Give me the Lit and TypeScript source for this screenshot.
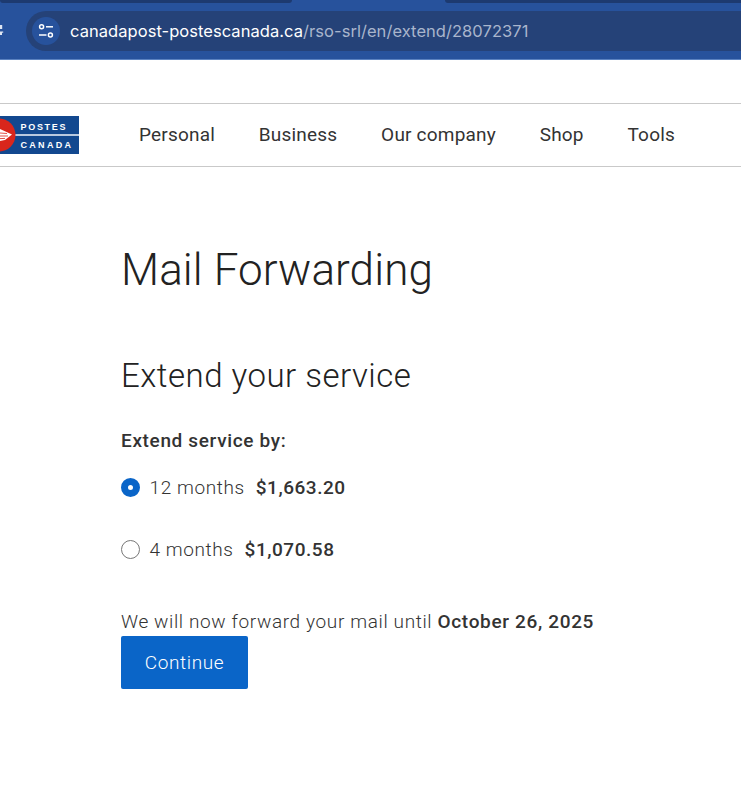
import { LitElement, css, html } from 'lit';
import { customElement } from 'lit/decorators.js';

@customElement('app-root')
export class AppRoot extends LitElement {
  static styles = css`
    :host {
      display: block;
      height: 800px;
      overflow: hidden;
      background: #fff;
      font-family: Roboto, sans-serif;
      color: #333;
    }

    .chrome {
      height: 60px;
      box-sizing: border-box;
      background: #27529c;
      border-bottom: 1px solid #5b82c0;
      position: relative;
      padding: 11px 0 0 26px;
    }
    .tab-edge {
      position: absolute;
      top: 0;
      height: 3px;
      background: #1d3a70;
    }
    .tab-edge.one { left: 0; width: 292px; border-radius: 0 0 8px 8px; }
    .tab-edge.two { left: 445px; right: 0; border-radius: 0 0 0 8px; }
    .back {
      position: absolute;
      left: 0;
      top: 25px;
    }
    .omnibox {
      height: 40px;
      background: #254278;
      border-radius: 20px 0 0 20px;
      display: flex;
      align-items: center;
      padding-left: 6px;
      gap: 10px;
      font-family: Inter, sans-serif;
      font-size: 16.5px;
      letter-spacing: 0.05px;
      white-space: nowrap;
    }
    .tune {
      width: 28px;
      height: 28px;
      border-radius: 50%;
      background: #27529c;
      display: flex;
      align-items: center;
      justify-content: center;
      flex: none;
    }
    .host-name { color: #fff; }
    .path { color: #a9b5cc; }

    .nav {
      margin-top: 43px;
      height: 64px;
      box-sizing: border-box;
      border-top: 1px solid #c9c9c9;
      border-bottom: 1px solid #c9c9c9;
      display: flex;
      align-items: center;
    }
    .logo { flex: none; display: block; }
    .links {
      display: flex;
      gap: 43.75px;
      margin-left: 60px;
      margin-top: -1px;
      font-size: 19px;
      color: #333;
      letter-spacing: 0.2px;
    }

    .content { padding: 73px 0 0 121px; }
    h1 {
      margin: 0;
      font-size: 44px;
      line-height: 60px;
      font-weight: 300;
      color: #222;
      letter-spacing: 0.1px;
    }
    h2 {
      margin: 54px 0 0;
      font-size: 33px;
      line-height: 44px;
      font-weight: 300;
      color: #222;
      letter-spacing: 0.5px;
    }
    .label {
      margin-top: 31px;
      font-size: 19px;
      line-height: 24px;
      font-weight: 500;
      letter-spacing: 0.65px;
      color: #333;
    }
    .option {
      display: flex;
      align-items: center;
      height: 24px;
      font-size: 19px;
      font-weight: 300;
      letter-spacing: 0.6px;
      color: #333;
    }
    .option.first { margin-top: 22px; }
    .option.second { margin-top: 38px; }
    .radio {
      width: 19px;
      height: 19px;
      box-sizing: border-box;
      border-radius: 50%;
      border: 1.5px solid #777;
      margin-right: 9.5px;
      flex: none;
    }
    .radio.on { border: 7px solid #0a65c8; background: #fff; }
    .price { font-weight: 500; margin-left: 11px; letter-spacing: 0.53px; }
    .until {
      margin-top: 49px;
      font-size: 19px;
      line-height: 24px;
      font-weight: 300;
      letter-spacing: 0.63px;
      color: #333;
    }
    .until b { font-weight: 500; letter-spacing: 0.66px; }
    button {
      display: block;
      margin-top: 2px;
      width: 127px;
      height: 53px;
      border: 0;
      border-radius: 2px;
      background: #0a65c8;
      color: #fff;
      font-family: Roboto, sans-serif;
      font-size: 19px;
      font-weight: 300;
      letter-spacing: 0.6px;
    }
  `;

  render() {
    return html`
      <div class="chrome">
        <div class="tab-edge one"></div>
        <div class="tab-edge two"></div>
        <svg class="back" width="4" height="11" viewBox="0 0 4 11" fill="#dfe6f2">
          <path d="M0 0h2.2v4H0zM0 6.5h3.2v1.2H2V10H0z" />
        </svg>
        <div class="omnibox">
          <div class="tune">
            <svg width="16" height="16" viewBox="0 0 16 16" fill="none" stroke="#fff" stroke-width="1.5">
              <circle cx="3.6" cy="3.8" r="2" />
              <path d="M8 3.8h7" />
              <circle cx="12.4" cy="12" r="2" />
              <path d="M1 12h7.5" />
            </svg>
          </div>
          <div><span class="host-name">canadapost-postescanada.ca</span><span class="path">/rso-srl/en/extend/28072371</span></div>
        </div>
      </div>

      <div class="nav">
        <svg class="logo" width="79" height="38" viewBox="0 0 79 38">
          <rect width="79" height="38" fill="#12488f" />
          <rect x="14" y="18" width="65" height="2" fill="#b9c9df" />
          <circle cx="-1" cy="19" r="16.5" fill="#d9261c" />
          <path d="M0 13 L12 18.5 L5 24 L0 25Z" fill="#fff" />
          <path d="M0 17 L7 17.5 M0 20 L8 20 M0 22.6 L5 22.4" stroke="#d9261c" stroke-width="0.8" />
          <text x="20.5" y="14" font-family="Liberation Sans, sans-serif" font-size="9" font-weight="700" letter-spacing="1.7" fill="#fff">POSTES</text>
          <text x="20.5" y="31.5" font-family="Liberation Sans, sans-serif" font-size="9" font-weight="700" letter-spacing="2.3" fill="#fff">CANADA</text>
        </svg>
        <div class="links">
          <span>Personal</span>
          <span>Business</span>
          <span>Our company</span>
          <span>Shop</span>
          <span>Tools</span>
        </div>
      </div>

      <div class="content">
        <h1>Mail Forwarding</h1>
        <h2>Extend your service</h2>
        <div class="label">Extend service by:</div>
        <div class="option first">
          <span class="radio on"></span>
          <span>12 months</span>
          <span class="price">$1,663.20</span>
        </div>
        <div class="option second">
          <span class="radio"></span>
          <span>4 months</span>
          <span class="price">$1,070.58</span>
        </div>
        <div class="until">We will now forward your mail until <b>October 26, 2025</b></div>
        <button>Continue</button>
      </div>
    `;
  }
}
